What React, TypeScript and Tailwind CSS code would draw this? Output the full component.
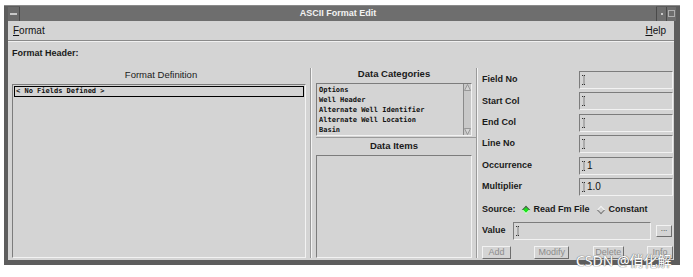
import React from "react";

const sunken =
  "border border-t-[#7c7c7c] border-l-[#7c7c7c] border-b-[#f2f2f2] border-r-[#f2f2f2]";
const raised =
  "border border-t-[#f2f2f2] border-l-[#f2f2f2] border-b-[#6e6e6e] border-r-[#6e6e6e]";

function Cursor() {
  return (
    <svg width="4" height="10" viewBox="0 0 4 10" className="shrink-0">
      <path d="M0 0.5H4M0 9.5H4M2 0.5V9.5" stroke="#333" strokeWidth="1" strokeDasharray="1 1" />
    </svg>
  );
}

function Field({ value }: { value?: string }) {
  return (
    <div className={`w-[94px] h-[18px] ${sunken} flex items-center pl-[2px] gap-[1px]`}>
      <Cursor />
      {value && <span className="text-[10px] text-[#111] leading-none">{value}</span>}
    </div>
  );
}

function Row({ label, value }: { label: string; value?: string }) {
  return (
    <div className="flex items-center justify-between h-[18px]">
      <span className="text-[9px] font-bold text-[#1a1a1a]">{label}</span>
      <Field value={value} />
    </div>
  );
}

function Btn({ label, w }: { label: string; w: string }) {
  return (
    <div className={`${w} h-[13px] ${raised} flex items-center justify-center text-[9px] text-[#8c8c8c] leading-none`}>
      {label}
    </div>
  );
}

const categories = [
  "Options",
  "Well Header",
  "Alternate Well Identifier",
  "Alternate Well Location",
  "Basin",
];

export default function App() {
  return (
    <div className="relative w-[693px] h-[277px] bg-white font-['Liberation_Sans',sans-serif] overflow-hidden">
      <div className="ml-[4px] pt-[5px] w-[676px]">
        <div className="w-[676px] bg-[#5d5d5d] flex flex-col">
          {/* title bar */}
          <div className="h-[16px] flex items-center border-t border-[#8a8a8a]">
            <div className="w-[4px]" />
            <div className="w-[12px] h-[14px] border-r border-[#4a4a4a] flex items-center justify-center bg-[#6a6a6a]">
              <div className="w-[7px] h-[2px] bg-[#c8c8c8]" />
            </div>
            <div className="flex-1 h-[15px] bg-[#6e6e6e] flex items-center justify-center text-[9px] font-bold text-[#f2f2f2]">
              ASCII Format Edit
            </div>
            <div className="w-[10px] h-[14px] bg-[#6e6e6e] border-l border-[#4a4a4a] flex items-center justify-center">
              <div className="w-[2px] h-[2px] bg-[#c8c8c8]" />
            </div>
            <div className="w-[10px] h-[14px] bg-[#6e6e6e] border-l border-[#4a4a4a] flex items-center justify-center">
              <div className="w-[7px] h-[7px] border border-[#b0b0b0]" />
            </div>
            <div className="w-[4px]" />
          </div>

          {/* body */}
          <div className="pl-[4px] pr-[6px] pb-[5px]">
            <div className="bg-[#d4d4d4] w-[666px] h-[239px] flex flex-col">
              {/* menu */}
              <div className="h-[20px] flex items-center justify-between px-[5px] border-b border-[#8a8a8a] text-[10px] text-[#111]">
                <span>
                  <span className="underline">F</span>ormat
                </span>
                <span className="mr-[3px]">
                  <span className="underline">H</span>elp
                </span>
              </div>
              {/* format header */}
              <div className="h-[25px] pl-[4px] flex items-center text-[9px] font-bold text-[#1a1a1a] border-t border-[#f0f0f0]">
                Format Header:
              </div>

              {/* main */}
              <div className="flex h-[193px]">
                {/* left */}
                <div className="w-[302px] pl-[4px] flex flex-col">
                  <div className="h-[18px] flex items-center justify-center text-[9.5px] text-[#1a1a1a]">
                    Format Definition
                  </div>
                  <div className={`w-[294px] h-[174px] ${sunken} p-[1px]`}>
                    <div className="h-[11px] border border-black flex items-center pl-[1px] font-['DejaVu_Sans_Mono',monospace] font-bold text-[7px] text-[#111] leading-none">
                      {"< No Fields Defined >"}
                    </div>
                  </div>
                </div>
                <div className="w-[2px] mt-[2px] mb-[1px] border-l border-[#9a9a9a] border-r border-r-[#f4f4f4]" />

                {/* middle */}
                <div className="w-[164px] pl-[4px] flex flex-col">
                  <div className="h-[17px] flex items-center justify-center text-[9.5px] font-bold text-[#1a1a1a] pr-[4px]">
                    Data Categories
                  </div>
                  <div className={`w-[156px] h-[53px] ${sunken} flex`}>
                    <div className="flex-1 pl-[2px] pt-[1px] font-['DejaVu_Sans_Mono',monospace] font-bold text-[7px] text-[#111]">
                      {categories.map((c) => (
                        <div key={c} className="h-[10px] leading-[10px] whitespace-pre">
                          {c}
                        </div>
                      ))}
                    </div>
                    <div className="w-[8px] border-l border-[#8a8a8a] flex flex-col justify-between bg-[#c8c8c8]">
                      <svg width="7" height="8" viewBox="0 0 7 8">
                        <path d="M3.5 0.5L6.5 6.5H0.5Z" fill="#d4d4d4" stroke="#8a8a8a" strokeWidth="0.8" />
                      </svg>
                      <svg width="7" height="8" viewBox="0 0 7 8">
                        <path d="M3.5 7.5L6.5 1.5H0.5Z" fill="#d4d4d4" stroke="#8a8a8a" strokeWidth="0.8" />
                      </svg>
                    </div>
                  </div>
                  <div className="h-[18px] flex items-center justify-center text-[9.5px] font-bold text-[#1a1a1a] pr-[4px] border-t border-[#9a9a9a] mt-[1px]">
                    Data Items
                  </div>
                  <div className={`w-[156px] h-[103px] ${sunken}`} />
                </div>
                <div className="w-[2px] mt-[2px] mb-[1px] border-l border-[#9a9a9a] border-r border-r-[#f4f4f4]" />

                {/* right */}
                <div className="flex-1 pl-[4px] pr-[1px] pt-[5px] flex flex-col">
                  <div className="flex flex-col gap-[3.4px]">
                    <Row label="Field No" />
                    <Row label="Start Col" />
                    <Row label="End Col" />
                    <Row label="Line No" />
                    <Row label="Occurrence" value="1" />
                    <Row label="Multiplier" value="1.0" />
                  </div>
                  <div className="h-[24px] flex items-center text-[9px] font-bold text-[#1a1a1a] mt-[2px]">
                    <span>Source:</span>
                    <span className="ml-[7px] w-[6px] h-[6px] rotate-45 bg-[#19e619] border border-t-[#5a5a5a] border-l-[#5a5a5a] border-b-[#f0f0f0] border-r-[#f0f0f0]" />
                    <span className="ml-[5px]">Read Fm File</span>
                    <span className="ml-[8px] w-[6px] h-[6px] rotate-45 border border-t-[#f4f4f4] border-l-[#f4f4f4] border-b-[#7a7a7a] border-r-[#7a7a7a]" />
                    <span className="ml-[5px]">Constant</span>
                  </div>
                  <div className="h-[18px] flex items-center">
                    <span className="text-[9px] font-bold text-[#1a1a1a] w-[31px]">Value</span>
                    <div className={`w-[138px] h-[18px] ${sunken} flex items-center pl-[2px]`}>
                      <Cursor />
                    </div>
                    <div className={`ml-auto mr-[1px] w-[16px] h-[12px] ${raised} flex items-center justify-center text-[8px] text-[#333] leading-none pb-[3px]`}>
                      ...
                    </div>
                  </div>
                  <div className="mt-[6px] flex justify-between">
                    <Btn label="Add" w="w-[29px]" />
                    <Btn label="Modify" w="w-[35px]" />
                    <Btn label="Delete" w="w-[31px]" />
                    <Btn label="Info" w="w-[26px]" />
                  </div>
                </div>
              </div>
            </div>
          </div>
        </div>
      </div>

      {/* watermark */}
      <div className="absolute left-[576px] top-[254px] text-[14px] text-white font-['Noto_Sans','Noto_Sans_CJK_SC',sans-serif] leading-none [text-shadow:0_0_1px_#666,0_0_1px_#666]">
        CSDN @俏化解
      </div>
    </div>
  );
}
